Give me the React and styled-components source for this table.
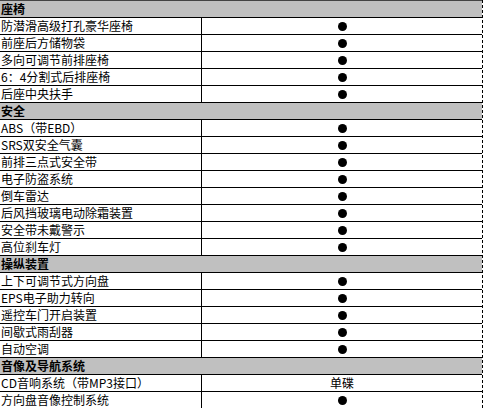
import React from 'react';
import styled, { createGlobalStyle } from 'styled-components';

const GlobalStyle = createGlobalStyle`
  html, body {
    margin: 0;
    padding: 0;
    background: #ffffff;
  }
  body {
    font-family: "Noto Sans CJK SC", "Liberation Sans", sans-serif;
  }
`;

const Sheet = styled.div`
  width: 482px;
  border-right: 1px dashed #000;
  background: #fff;
`;

const SectionRow = styled.div`
  height: 16px;
  border-top: 1px solid ${(p) => (p.$first ? '#444' : '#000')};
  background: #c0c0c0;
  font-size: 12px;
  font-weight: 700;
  line-height: 16px;
  color: #000;
  padding-left: 1px;
  white-space: nowrap;
`;

const ItemRow = styled.div`
  display: grid;
  grid-template-columns: 202px 1fr;
  height: 16px;
  border-top: 1px solid #000;
`;

const Label = styled.div`
  border-right: 1px solid #000;
  font-size: 12px;
  line-height: 16px;
  color: #000;
  padding-left: 1px;
  white-space: nowrap;
  overflow: hidden;
`;

const Value = styled.div`
  display: flex;
  align-items: center;
  justify-content: center;
  font-size: 12px;
  line-height: 16px;
  color: #000;
`;

const Dot = styled.span`
  display: block;
  width: 9px;
  height: 9px;
  border-radius: 50%;
  background: #000;
`;

const sections = [
  {
    title: '座椅',
    items: [
      ['防潜滑高级打孔豪华座椅'],
      ['前座后方储物袋'],
      ['多向可调节前排座椅'],
      ['6：4分割式后排座椅'],
      ['后座中央扶手'],
    ],
  },
  {
    title: '安全',
    items: [
      ['ABS（带EBD）'],
      ['SRS双安全气囊'],
      ['前排三点式安全带'],
      ['电子防盗系统'],
      ['倒车雷达'],
      ['后风挡玻璃电动除霜装置'],
      ['安全带未戴警示'],
      ['高位刹车灯'],
    ],
  },
  {
    title: '操纵装置',
    items: [
      ['上下可调节式方向盘'],
      ['EPS电子助力转向'],
      ['遥控车门开启装置'],
      ['间歇式雨刮器'],
      ['自动空调'],
    ],
  },
  {
    title: '音像及导航系统',
    items: [
      ['CD音响系统（带MP3接口）', '单碟'],
      ['方向盘音像控制系统'],
    ],
  },
];

const App = () => (
  <>
    <GlobalStyle />
    <Sheet>
      {sections.map((section, si) => (
        <React.Fragment key={section.title}>
          <SectionRow $first={si === 0}>{section.title}</SectionRow>
          {section.items.map(([label, value]) => (
            <ItemRow key={label}>
              <Label>{label}</Label>
              <Value>{value ? value : <Dot />}</Value>
            </ItemRow>
          ))}
        </React.Fragment>
      ))}
    </Sheet>
  </>
);

export default App;
